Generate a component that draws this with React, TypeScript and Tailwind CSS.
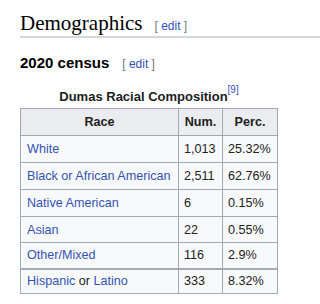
import React from "react";

const LINK = "text-[#3452b4]";

function Edit() {
  return (
    <span className="text-[12px] text-[#72777d] font-normal whitespace-nowrap">
      [ <span className={LINK}>edit</span> ]
    </span>
  );
}

type Row = { race: React.ReactNode; num: string; perc: string; thick?: boolean };

const rows: Row[] = [
  { race: <span className={LINK}>White</span>, num: "1,013", perc: "25.32%" },
  { race: <span className={LINK}>Black or African American</span>, num: "2,511", perc: "62.76%" },
  { race: <span className={LINK}>Native American</span>, num: "6", perc: "0.15%" },
  { race: <span className={LINK}>Asian</span>, num: "22", perc: "0.55%" },
  { race: <span className={LINK}>Other/Mixed</span>, num: "116", perc: "2.9%" },
  {
    race: (
      <>
        <span className={LINK}>Hispanic</span> or <span className={LINK}>Latino</span>
      </>
    ),
    num: "333",
    perc: "8.32%",
    thick: true,
  },
];

export default function App() {
  return (
    <div
      className="w-[320px] h-[304px] overflow-hidden bg-white pl-[20px] pt-[10px] text-[#202122]"
      style={{ fontFamily: '"Liberation Sans", Arial, sans-serif' }}
    >
      <div className="flex items-baseline border-b-2 border-[#d4d7db] h-[28px]">
        <h2
          className="text-[21px] leading-[26px] text-black font-normal"
          style={{ fontFamily: '"Liberation Serif", "Times New Roman", serif' }}
        >
          Demographics
        </h2>
        <span className="ml-[12px]">
          <Edit />
        </span>
      </div>

      <div className="flex items-baseline mt-[13px] h-[20px]">
        <h3 className="text-[15px] leading-[20px] font-bold text-black">2020 census</h3>
        <span className="ml-[13px]">
          <Edit />
        </span>
      </div>

      <table className="mt-[15px] table-fixed border-collapse w-[257px] text-[12.6px] leading-[16px]">
        <caption className="font-bold text-[13px] leading-[22px] text-[#202122]">
          Dumas Racial Composition
          <sup className={`${LINK} font-normal text-[10px] align-[3px] leading-none`}>[9]</sup>
        </caption>
        <colgroup>
          <col className="w-[158px]" />
          <col className="w-[44px]" />
          <col className="w-[55px]" />
        </colgroup>
        <thead>
          <tr className="h-[27px] bg-[#eaecf0]">
            <th className="border border-[#a2a9b1] font-bold text-center px-[6px]">Race</th>
            <th className="border border-[#a2a9b1] font-bold text-center px-[5px]">Num.</th>
            <th className="border border-[#a2a9b1] font-bold text-center px-[5px]">Perc.</th>
          </tr>
        </thead>
        <tbody>
          {rows.map((r, i) => (
            <tr
              key={i}
              className={`bg-[#f8f9fa] ${i === 5 ? "h-[25px]" : i === 3 || i === 4 ? "h-[26px]" : "h-[27px]"}`}
            >
              <td
                className={`border border-[#a2a9b1] px-[6px] whitespace-nowrap ${r.thick ? "border-t-2" : ""}`}
              >
                {r.race}
              </td>
              <td className={`border border-[#a2a9b1] px-[5px] ${r.thick ? "border-t-2" : ""}`}>{r.num}</td>
              <td className={`border border-[#a2a9b1] px-[5px] ${r.thick ? "border-t-2" : ""}`}>{r.perc}</td>
            </tr>
          ))}
        </tbody>
      </table>
    </div>
  );
}
